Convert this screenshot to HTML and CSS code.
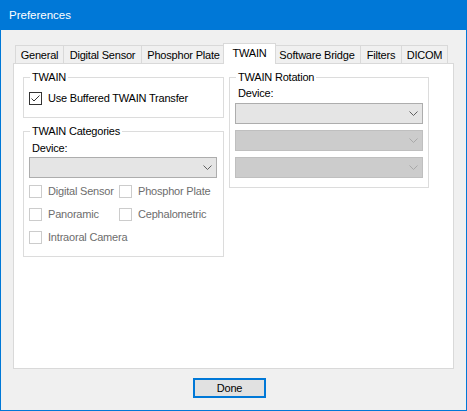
FILE: index.html
```html
<!DOCTYPE html>
<html>
<head>
<meta charset="utf-8">
<link rel="stylesheet" href="styles.css">
</head>
<body>
<div class="window">
  <div class="titlebar">Preferences</div>
  <div class="tabs">
    <div class="tab t-general">General</div>
    <div class="tab t-digital">Digital Sensor</div>
    <div class="tab t-phosphor">Phosphor Plate</div>
    <div class="tab t-twain selected">TWAIN</div>
    <div class="tab t-bridge">Software Bridge</div>
    <div class="tab t-filters">Filters</div>
    <div class="tab t-dicom">DICOM</div>
  </div>
  <div class="panel">
    <div class="col">
      <div class="group g-twain">
        <div class="group-title">TWAIN</div>
        <div class="check first">
          <span class="box"><svg width="11" height="11" viewBox="0 0 11 11"><path d="M1.5 5.5 L4 8 L9.5 2.5" fill="none" stroke="#333" stroke-width="1"/></svg></span>
          <span>Use Buffered TWAIN Transfer</span>
        </div>
      </div>
      <div class="group g-cat">
        <div class="group-title">TWAIN Categories</div>
        <div class="label">Device:</div>
        <div class="combo"><svg width="9" height="5" viewBox="0 0 9 5"><path d="M0.5 0.5 L4.5 4.5 L8.5 0.5" fill="none" stroke="#606060" stroke-width="1"/></svg></div>
        <div class="check-grid">
          <div class="check disabled"><span class="box"></span><span>Digital Sensor</span></div>
          <div class="check disabled"><span class="box"></span><span>Phosphor Plate</span></div>
          <div class="check disabled"><span class="box"></span><span>Panoramic</span></div>
          <div class="check disabled"><span class="box"></span><span>Cephalometric</span></div>
          <div class="check disabled"><span class="box"></span><span>Intraoral Camera</span></div>
        </div>
      </div>
    </div>
    <div class="group g-rot">
      <div class="group-title">TWAIN Rotation</div>
      <div class="label">Device:</div>
      <div class="combo"><svg width="9" height="5" viewBox="0 0 9 5"><path d="M0.5 0.5 L4.5 4.5 L8.5 0.5" fill="none" stroke="#606060" stroke-width="1"/></svg></div>
      <div class="combo disabled"><svg width="9" height="5" viewBox="0 0 9 5"><path d="M0.5 0.5 L4.5 4.5 L8.5 0.5" fill="none" stroke="#a8a8a8" stroke-width="1"/></svg></div>
      <div class="combo disabled"><svg width="9" height="5" viewBox="0 0 9 5"><path d="M0.5 0.5 L4.5 4.5 L8.5 0.5" fill="none" stroke="#a8a8a8" stroke-width="1"/></svg></div>
    </div>
  </div>
  <div class="footer">
    <div class="btn">Done</div>
  </div>
</div>
</body>
</html>
```
FILE: styles.css
```css
* { box-sizing: border-box; }
html, body { margin: 0; padding: 0; }
body {
  font-family: "Liberation Sans", Arial, sans-serif;
  font-size: 11px;
  letter-spacing: -0.2px;
  color: #000;
  background: #f0f0f0;
}
.window {
  width: 467px;
  height: 411px;
  border: 1px solid #0078d7;
  border-top: 0;
  background: #f0f0f0;
  display: flex;
  flex-direction: column;
}
.titlebar {
  height: 30px;
  background: #0078d7;
  color: #fff;
  font-size: 11.5px;
  letter-spacing: 0;
  padding-left: 8px;
  display: flex;
  align-items: center;
  flex-shrink: 0;
}
.tabs {
  display: flex;
  align-items: flex-end;
  margin: 13px 0 0 14px;
}
.tab {
  height: 18px;
  border: 1px solid #d9d9d9;
  border-bottom: 0;
  background: #f0f0f0;
  display: flex;
  align-items: center;
  justify-content: center;
  margin-left: -1px;
  white-space: nowrap;
}
.t-general { width: 49px; margin-left: 0; }
.t-digital { width: 79px; }
.t-phosphor { width: 85px; }
.t-twain { width: 49px; }
.t-bridge { width: 88px; }
.t-filters { width: 42px; }
.t-dicom { width: 47px; }
.tab.selected {
  width: 53px;
  height: 21px;
  margin: 0 -2px -1px -3px;
  background: #fff;
  position: relative;
  z-index: 1;
  padding-bottom: 3px;
}
.panel {
  width: 441px;
  height: 306px;
  margin-left: 12px;
  background: #fff;
  border: 1px solid #d9d9d9;
  padding: 13px 0 0 9px;
  display: flex;
  align-items: flex-start;
  gap: 5px;
}
.col {
  display: flex;
  flex-direction: column;
  gap: 13px;
}
.group {
  border: 1px solid #dcdcdc;
  display: flex;
  flex-direction: column;
  align-items: flex-start;
  padding-left: 5px;
}
.group-title {
  line-height: 13px;
  height: 13px;
  margin: -7px 0 0 1px;
  padding: 0 2px;
  background: #fff;
}
.g-twain { width: 201px; height: 41px; }
.g-cat { width: 201px; height: 126px; }
.g-rot { width: 200px; height: 111px; }
.label {
  line-height: 13px;
  margin: 4px 0 0 3px;
}
.g-rot .label { margin-top: 3px; }
.combo {
  width: 188px;
  height: 21px;
  margin-top: 2px;
  background: #e5e5e5;
  border: 1px solid #adadad;
  display: flex;
  align-items: center;
  justify-content: flex-end;
  padding-right: 4px;
}
.g-rot .combo { margin-top: 6px; }
.g-rot .label + .combo { margin-top: 3px; }
.combo.disabled {
  background: #cccccc;
  border-color: #bfbfbf;
}
.check {
  display: flex;
  align-items: center;
  gap: 6px;
  height: 13px;
  line-height: 13px;
  white-space: nowrap;
}
.check.first { margin-top: 8px; }
.box {
  width: 13px;
  height: 13px;
  border: 1px solid #333;
  background: #fff;
  flex-shrink: 0;
  display: flex;
}
.check.disabled { color: #6d6d6d; }
.check.disabled .box { border-color: #cccccc; }
.check-grid {
  display: grid;
  grid-template-columns: 90px auto;
  row-gap: 10px;
  margin-top: 7px;
}
.footer {
  padding: 9px 0 0 192px;
}
.btn {
  width: 73px;
  height: 20px;
  border: 2px solid #0078d7;
  background: #e1e1e1;
  display: flex;
  align-items: center;
  justify-content: center;
}
```
